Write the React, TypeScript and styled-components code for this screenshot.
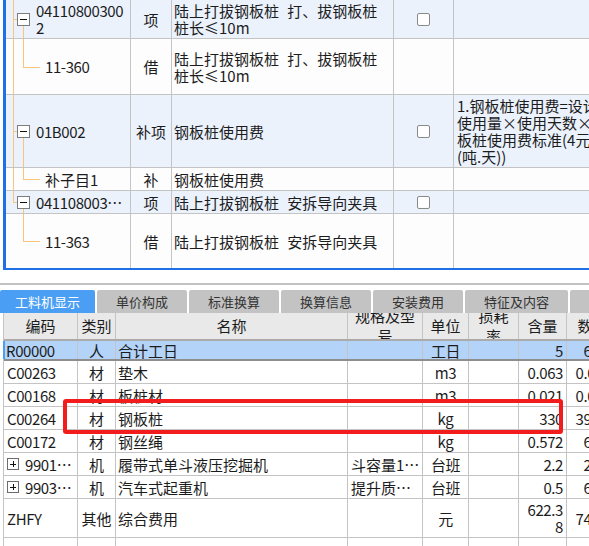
import styled, { createGlobalStyle } from "styled-components";

const GlobalStyle = createGlobalStyle`
  html, body {
    margin: 0;
    padding: 0;
    background: #ffffff;
    overflow: hidden;
  }
  body {
    font-family: "Noto Sans CJK SC", "Noto Sans", sans-serif;
    font-size: 15px;
    color: #1c1c1c;
  }
`;

const TOP_COLS = "125px 41px 222px 60px 170px";
const BOTTOM_COLS = "74px 38px 232px 75px 46px 50px 48px 52px";
const TREE = "#f8c57e";
const GRID = "#c4c4c4";

type TopItem = {
  h: number;
  group?: boolean;
  kind: "parent" | "child";
  lastParent?: boolean;
  noTrunk?: boolean;
  code: string[];
  type: string;
  name: string[];
  check?: boolean;
  desc?: string[];
};

const topRows: TopItem[] = [
  {
    h: 39,
    group: true,
    kind: "parent",
    code: ["04110800300", "2"],
    type: "项",
    name: ["陆上打拔钢板桩 打、拔钢板桩", "桩长≤10m"],
    check: true,
  },
  {
    h: 56,
    kind: "child",
    code: ["11-360"],
    type: "借",
    name: ["陆上打拔钢板桩 打、拔钢板桩", "桩长≤10m"],
  },
  {
    h: 73,
    group: true,
    kind: "parent",
    code: ["01B002"],
    type: "补项",
    name: ["钢板桩使用费"],
    check: true,
    desc: ["1.钢板桩使用费=设计", "使用量×使用天数×钢", "板桩使用费标准(4元/", "(吨.天))"],
  },
  { h: 23, kind: "child", code: ["补子目1"], type: "补", name: ["钢板桩使用费"] },
  {
    h: 23,
    group: true,
    kind: "parent",
    lastParent: true,
    code: ["041108003…"],
    type: "项",
    name: ["陆上打拔钢板桩 安拆导向夹具"],
    check: true,
  },
  {
    h: 54,
    kind: "child",
    noTrunk: true,
    code: ["11-363"],
    type: "借",
    name: ["陆上打拔钢板桩 安拆导向夹具"],
  },
];

const tabs = [
  { label: "工料机显示", w: 95 },
  { label: "单价构成", w: 90 },
  { label: "标准换算", w: 90 },
  { label: "换算信息", w: 90 },
  { label: "安装费用", w: 90 },
  { label: "特征及内容", w: 103 },
  { label: "工程量明细", w: 112 },
];

const headers: string[][] = [
  ["编码"],
  ["类别"],
  ["名称"],
  ["规格及型", "号"],
  ["单位"],
  ["损耗", "率"],
  ["含量"],
  ["数量"],
];

type Item = {
  code: string;
  plus?: boolean;
  type: string;
  name: string;
  spec?: string;
  unit: string;
  qty: string[];
  total: string;
  selected?: boolean;
  h?: number;
};

const items: Item[] = [
  { code: "R00000", type: "人", name: "合计工日", unit: "工日", qty: ["5"], total: "6.5", selected: true, h: 20 },
  { code: "C00263", type: "材", name: "垫木", unit: "m3", qty: ["0.063"], total: "0.08" },
  { code: "C00168", type: "材", name: "板桩材", unit: "m3", qty: ["0.021"], total: "0.03" },
  { code: "C00264", type: "材", name: "钢板桩", unit: "kg", qty: ["330"], total: "39.6" },
  { code: "C00172", type: "材", name: "钢丝绳", unit: "kg", qty: ["0.572"], total: "6.9" },
  { code: "9901…", plus: true, type: "机", name: "履带式单斗液压挖掘机", spec: "斗容量1…", unit: "台班", qty: ["2.2"], total: "2.6" },
  { code: "9903…", plus: true, type: "机", name: "汽车式起重机", spec: "提升质…", unit: "台班", qty: ["0.5"], total: "6.0" },
  { code: "ZHFY", type: "其他", name: "综合费用", unit: "元", qty: ["622.3", "8"], total: "74.7", h: 39 },
];

function Lines({ lines }: { lines: string[] }) {
  return (
    <span>
      {lines.map((l, i) => (
        <span key={i}>
          {i > 0 && <br />}
          {l}
        </span>
      ))}
    </span>
  );
}

function TreeMarks({ row }: { row: TopItem }) {
  return (
    <>
      {!row.noTrunk && <Trunk $half={row.lastParent} />}
      {row.kind === "parent" ? (
        <>
          <Stub />
          <ExpandBox />
          <BranchDown />
        </>
      ) : (
        <>
          <BranchUp />
          <Elbow />
        </>
      )}
    </>
  );
}

export default function App() {
  return (
    <Page>
      <GlobalStyle />
      <TopPane>
        {topRows.map((row, i) => (
          <TopRow key={i} $h={row.h} $group={row.group} $last={i === topRows.length - 1}>
            <CodeCell $indent={row.kind === "parent" ? 30 : 39}>
              <TreeMarks row={row} />
              <CodeText $latin={!row.code[0].startsWith("补")}>
                <Lines lines={row.code} />
              </CodeText>
            </CodeCell>
            <TopCell $align="center">{row.type}</TopCell>
            <TopCell $wide>
              <Lines lines={row.name} />
            </TopCell>
            <TopCell $align="center">{row.check && <CheckBox />}</TopCell>
            <DescCell>{row.desc && <Lines lines={row.desc} />}</DescCell>
          </TopRow>
        ))}
      </TopPane>

      <Divider />

      <TabBar>
        {tabs.map((t, i) => (
          <Tab key={t.label} $w={t.w} $active={i === 0}>
            {t.label}
          </Tab>
        ))}
      </TabBar>

      <BottomPane>
        <Table>
          <HeaderRow>
            {headers.map((h, i) => (
              <HeaderCell key={i}>
                <Lines lines={h} />
              </HeaderCell>
            ))}
          </HeaderRow>
          {items.map((it) => (
            <DataRow key={it.code} $h={it.h ?? 23} $selected={it.selected}>
              <Cell $pad={3} $selected={it.selected}>
                {it.plus && <PlusBox />}
                <Num>{it.code}</Num>
              </Cell>
              <Cell $align="center">{it.type}</Cell>
              <Cell $pad={2}>{it.name}</Cell>
              <Cell $pad={3}>{it.spec}</Cell>
              <Cell $align="center">
                <Num>{it.unit}</Num>
              </Cell>
              <Cell />
              <Cell $align="right" $pad={3}>
                <Num>
                  <Lines lines={it.qty} />
                </Num>
              </Cell>
              <Cell $align="right" $pad={15}>
                <Num>{it.total}</Num>
              </Cell>
            </DataRow>
          ))}
          <FillerRow>
            {headers.map((_, i) => (
              <span key={i} />
            ))}
          </FillerRow>
        </Table>
        <Highlight />
      </BottomPane>
    </Page>
  );
}

const Page = styled.div`
  width: 589px;
  height: 546px;
  overflow: hidden;
  display: flex;
  flex-direction: column;
`;

const TopPane = styled.div`
  margin-left: 3px;
  height: 270px;
  box-sizing: border-box;
  border-left: 3px solid #1f6fe6;
  border-bottom: 2px solid #1f6fe6;
  overflow: hidden;
  flex-shrink: 0;
`;

const TopRow = styled.div<{ $h: number; $group?: boolean; $last?: boolean }>`
  display: grid;
  grid-template-columns: ${TOP_COLS};
  height: ${(p) => p.$h}px;
  box-sizing: border-box;
  background: ${(p) => (p.$group ? "#ebf2fc" : "#fdfdfd")};
  border-bottom: ${(p) => (p.$last ? "none" : `1px solid ${GRID}`)};
`;

const TopCell = styled.div<{ $align?: "left" | "center"; $wide?: boolean }>`
  position: relative;
  display: flex;
  align-items: center;
  justify-content: ${(p) => (p.$align === "center" ? "center" : "flex-start")};
  box-sizing: border-box;
  padding: 0 2px;
  border-right: 1px solid ${GRID};
  line-height: 17px;
  white-space: nowrap;
  word-spacing: ${(p) => (p.$wide ? "5px" : "0")};
  overflow: hidden;
`;

const CodeCell = styled(TopCell)<{ $indent: number }>`
  padding-left: ${(p) => p.$indent}px;
`;

const CodeText = styled.span<{ $latin?: boolean }>`
  letter-spacing: ${(p) => (p.$latin ? "-0.4px" : "0")};
`;

const DescCell = styled(TopCell)`
  padding-left: 3px;
  border-right: none;
`;

const Trunk = styled.span<{ $half?: boolean }>`
  position: absolute;
  left: 7px;
  top: 0;
  width: 1px;
  height: ${(p) => (p.$half ? "50%" : "100%")};
  background: ${TREE};
`;

const Stub = styled.span`
  position: absolute;
  left: 7px;
  top: 50%;
  width: 5px;
  height: 1px;
  background: ${TREE};
`;

const ExpandBox = styled.span`
  position: absolute;
  left: 11px;
  top: calc(50% - 6px);
  width: 13px;
  height: 13px;
  box-sizing: border-box;
  border: 1px solid #7d7d7d;
  background: #ffffff;

  &::after {
    content: "";
    position: absolute;
    left: 2px;
    top: 5px;
    width: 7px;
    height: 1px;
    background: #111;
  }
`;

const BranchDown = styled.span`
  position: absolute;
  left: 17px;
  top: calc(50% + 7px);
  bottom: 0;
  width: 1px;
  background: ${TREE};
`;

const BranchUp = styled.span`
  position: absolute;
  left: 17px;
  top: 0;
  height: 50%;
  width: 1px;
  background: ${TREE};
`;

const Elbow = styled.span`
  position: absolute;
  left: 17px;
  top: 50%;
  width: 17px;
  height: 1px;
  background: ${TREE};
`;

const CheckBox = styled.span`
  width: 13px;
  height: 13px;
  box-sizing: border-box;
  border: 1px solid #8a8a8a;
  border-radius: 2px;
  background: #ffffff;
`;

const Divider = styled.div`
  flex-shrink: 0;
  height: 2px;
  margin: 13px 0 5px;
  background: #c2c2c2;
`;

const TabBar = styled.div`
  display: flex;
  gap: 2px;
  height: 23px;
  flex-shrink: 0;
`;

const Tab = styled.div<{ $w: number; $active?: boolean }>`
  flex: 0 0 ${(p) => p.$w}px;
  display: flex;
  align-items: center;
  justify-content: center;
  border-radius: 2px 2px 0 0;
  background: ${(p) => (p.$active ? "#4a9ef3" : "#c3c3c3")};
  color: ${(p) => (p.$active ? "#ffffff" : "#333333")};
  font-size: 13px;
  white-space: nowrap;
  overflow: hidden;
`;

const BottomPane = styled.div`
  position: relative;
  flex: 1;
`;

const Table = styled.div`
  margin-left: 3px;
  border-left: 1px solid ${GRID};
  width: max-content;
`;

const HeaderRow = styled.div`
  display: grid;
  grid-template-columns: ${BOTTOM_COLS};
  height: 28px;
  box-sizing: border-box;
  background: #e9e9e9;
  border-bottom: 2px solid #ababab;
`;

const HeaderCell = styled.div`
  display: flex;
  align-items: center;
  justify-content: center;
  text-align: center;
  border-right: 1px solid ${GRID};
  line-height: 20px;
  white-space: nowrap;
  overflow: hidden;
`;

const DataRow = styled.div<{ $h: number; $selected?: boolean }>`
  display: grid;
  grid-template-columns: ${BOTTOM_COLS};
  height: ${(p) => p.$h}px;
  box-sizing: border-box;
  background: ${(p) => (p.$selected ? "#b3d3f8" : "#ffffff")};
  border-bottom: ${(p) => (p.$selected ? "2px solid #8e8e8e" : `1px solid ${GRID}`)};
`;

const Cell = styled.div<{ $align?: "left" | "center" | "right"; $pad?: number; $selected?: boolean }>`
  display: flex;
  align-items: center;
  justify-content: ${(p) =>
    p.$align === "center" ? "center" : p.$align === "right" ? "flex-end" : "flex-start"};
  text-align: ${(p) => p.$align ?? "left"};
  box-sizing: border-box;
  padding: ${(p) =>
    p.$align === "right" ? `0 ${p.$pad ?? 0}px 0 0` : `0 0 0 ${p.$pad ?? 0}px`};
  border-right: 1px solid ${GRID};
  box-shadow: ${(p) => (p.$selected ? "inset 2px 0 #4a9ef3" : "none")};
  margin-left: ${(p) => (p.$selected ? "-1px" : "0")};
  line-height: 17px;
  white-space: nowrap;
  overflow: hidden;
`;

const Num = styled.span`
  letter-spacing: -0.4px;
`;

const PlusBox = styled.span`
  position: relative;
  flex: 0 0 auto;
  width: 12px;
  height: 12px;
  margin-right: 6px;
  box-sizing: border-box;
  border: 1px solid #6c6c6c;

  &::before,
  &::after {
    content: "";
    position: absolute;
    background: #111;
  }
  &::before {
    left: 2px;
    top: 4.5px;
    width: 6px;
    height: 1px;
  }
  &::after {
    left: 4.5px;
    top: 2px;
    width: 1px;
    height: 6px;
  }
`;

const FillerRow = styled.div`
  display: grid;
  grid-template-columns: ${BOTTOM_COLS};
  height: 20px;
  & > * {
    border-right: 1px solid ${GRID};
  }
`;

const Highlight = styled.div`
  position: absolute;
  left: 63px;
  top: 86px;
  width: 500px;
  height: 35px;
  box-sizing: border-box;
  border: 4px solid #f31c1c;
  border-radius: 3px;
  pointer-events: none;
`;
